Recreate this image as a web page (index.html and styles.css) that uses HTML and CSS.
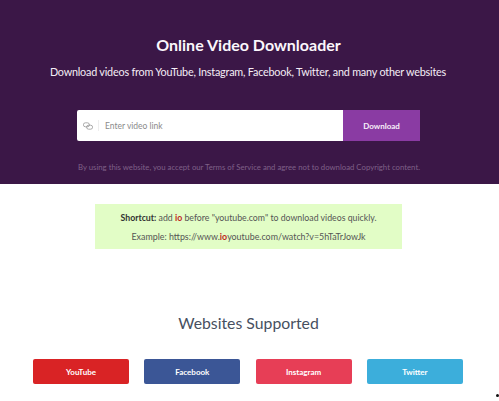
FILE: index.html
```html
<!DOCTYPE html>
<html lang="en">
<head>
<meta charset="utf-8">
<title>Online Video Downloader</title>
<link rel="stylesheet" href="styles.css">
</head>
<body>
<section class="hero">
  <h1 class="hero-title">Online Video Downloader</h1>
  <p class="hero-sub">Download videos from YouTube, Instagram, Facebook, Twitter, and many other websites</p>
  <form class="search">
    <div class="search-field">
      <svg class="link-icon" viewBox="0 0 10 8" width="10" height="8" aria-hidden="true">
        <rect x="0.4" y="0.8" width="6" height="4" rx="2" fill="none" stroke="#8a8a8a" stroke-width="0.7"/>
        <rect x="3.6" y="3.2" width="6" height="4" rx="2" fill="none" stroke="#8a8a8a" stroke-width="0.7"/>
      </svg>
      <span class="divider"></span>
      <span class="placeholder">Enter video link</span>
    </div>
    <div class="search-btn">Download</div>
  </form>
  <p class="terms">By using this website, you accept our Terms of Service and agree not to download Copyright content.</p>
</section>
<section class="shortcut">
  <p class="shortcut-line"><b class="strong">Shortcut:</b> add <b class="red">io</b> before "youtube.com" to download videos quickly.</p>
  <p class="shortcut-line example">Example: https://www.<b class="red">io</b>youtube.com/watch?v=5hTaTrJowJk</p>
</section>
<h2 class="sites-title">Websites Supported</h2>
<nav class="sites">
  <a class="site youtube">YouTube</a>
  <a class="site facebook">Facebook</a>
  <a class="site instagram">Instagram</a>
  <a class="site twitter">Twitter</a>
</nav>
<span class="dot"></span>
</body>
</html>
```

FILE: styles.css
```css
html, body { margin: 0; padding: 0; }
body {
  width: 499px;
  height: 401px;
  overflow: hidden;
  position: relative;
  background: #fff;
  font-family: Lato, "Liberation Sans", sans-serif;
}
.hero {
  height: 184px;
  background: #3b1747;
  box-sizing: border-box;
  padding-top: 35px;
  display: flex;
  flex-direction: column;
  align-items: center;
}
.hero-title {
  margin: 0 0 0 -2px;
  font-size: 16px;
  line-height: 19px;
  font-weight: 700;
  color: #fbf7fc;
}
.hero-sub {
  margin: 9px 0 0 -3px;
  font-size: 10.8px;
  letter-spacing: -0.2px;
  line-height: 17px;
  color: #f5eef6;
}
.search {
  margin: 30px 0 0 -2px;
  width: 343px;
  height: 31px;
  display: flex;
}
.search-field {
  flex: 1;
  background: #fff;
  border-radius: 2px 0 0 2px;
  display: flex;
  align-items: center;
  padding-left: 6px;
}
.divider {
  width: 1px;
  height: 11px;
  background: #eee;
  margin: 0 6px 0 5px;
}
.placeholder {
  font-size: 8.5px;
  color: #8b8b8b;
}
.search-btn {
  width: 77px;
  background: #8a3ba3;
  color: #f7effa;
  font-size: 8px;
  font-weight: 700;
  display: flex;
  align-items: center;
  justify-content: center;
}
.terms {
  margin: 20px 0 0 -1px;
  font-size: 7.78px;
  line-height: 12px;
  color: #7f6088;
}
.shortcut {
  margin: 20px 0 0 95px;
  width: 307px;
  height: 45px;
  background: #e2fdc6;
  box-sizing: border-box;
  padding-top: 8px;
  font-size: 8.75px;
  color: #555;
  text-align: center;
}
.shortcut-line { margin: 0 0 7px; line-height: 12px; }
.example { font-size: 8.9px; }
.strong { color: #333; }
.red { color: #c0281c; }
.sites-title {
  margin: 64px 0 0 -2px;
  font-size: 15.8px;
  line-height: 20px;
  font-weight: 400;
  color: #47505f;
  text-align: center;
}
.sites {
  margin: 26px 0 0 33px;
  display: flex;
  gap: 15.3px;
}
.site {
  width: 96px;
  height: 25px;
  border-radius: 2px;
  color: #fff;
  font-size: 8px;
  font-weight: 700;
  display: flex;
  align-items: center;
  justify-content: center;
}
.youtube { background: #d92325; }
.facebook { background: #3b5696; }
.instagram { background: #e73e56; }
.twitter { background: #3caedb; }
.dot {
  position: absolute;
  left: 496px;
  top: 394px;
  width: 3px;
  height: 3px;
  border-radius: 50%;
  background: #111;
}
```
